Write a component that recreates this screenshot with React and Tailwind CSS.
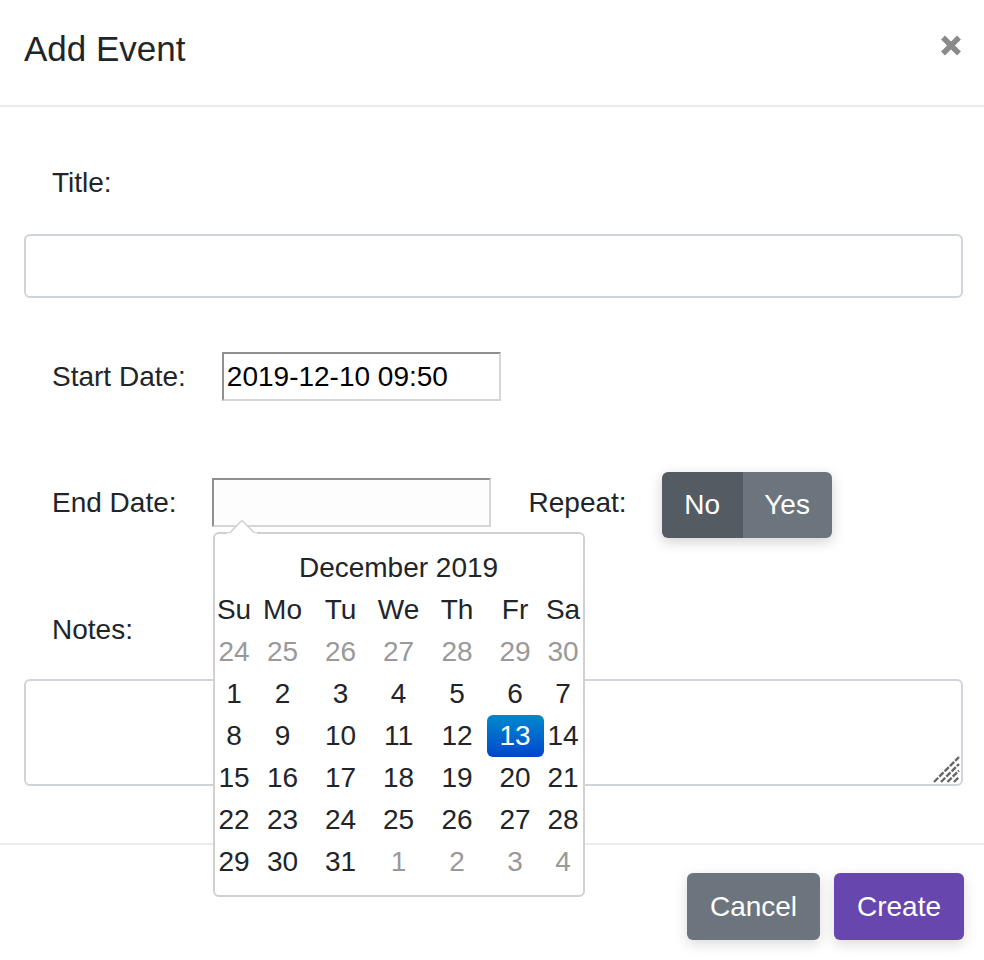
import React from 'react';

const cols = 'grid grid-cols-[39px_58px_58px_58px_59px_57px_39px]';

const weeks = [
  [[24, 1], [25, 1], [26, 1], [27, 1], [28, 1], [29, 1], [30, 1]],
  [[1], [2], [3], [4], [5], [6], [7]],
  [[8], [9], [10], [11], [12], [13], [14]],
  [[15], [16], [17], [18], [19], [20], [21]],
  [[22], [23], [24], [25], [26], [27], [28]],
  [[29], [30], [31], [1, 1], [2, 1], [3, 1], [4, 1]],
];

const DatePicker = () => (
  <div className="absolute left-[1px] top-[54px] z-10 w-[372px] h-[365px] bg-white border-2 border-[#d0d0d0] rounded-md pt-[13px] text-[28px] leading-[42px] text-[#212529]">
    <svg className="absolute left-[12px] top-[-15px]" width="30" height="16" viewBox="0 0 30 16">
      <polygon points="1,15.5 15,1.5 29,15.5" fill="white" stroke="#d0d0d0" strokeWidth="1.5" />
      <rect x="0" y="14" width="30" height="2" fill="white" />
    </svg>
    <div className="text-center h-[42px]">December 2019</div>
    <div className={cols}>
      {['Su', 'Mo', 'Tu', 'We', 'Th', 'Fr', 'Sa'].map((d) => (
        <div key={d} className="text-center h-[42px]">{d}</div>
      ))}
    </div>
    {weeks.map((week, i) => (
      <div key={i} className={cols}>
        {week.map(([day, muted]) => {
          const active = day === 13 && !muted;
          return (
            <div
              key={day + '-' + (muted ? 'm' : 'c')}
              className={`text-center h-[42px] ${
                active
                  ? 'bg-gradient-to-b from-[#0088cc] to-[#0044cc] text-white rounded-[6px]'
                  : muted
                  ? 'text-[#999999]'
                  : ''
              }`}
            >
              {day}
            </div>
          );
        })}
      </div>
    ))}
  </div>
);

const App = () => {
  return (
    <div className="w-[984px] h-[960px] bg-white flex flex-col font-['Liberation_Sans',Arial,sans-serif] text-[#212529] overflow-hidden">
      <header className="h-[107px] shrink-0 flex items-start justify-between pl-6 pr-[22px] pt-[28px] border-b-2 border-[#e9ecef]">
        <h1 className="text-[35px] leading-[42px] font-normal">Add Event</h1>
        <svg className="mt-[7px]" width="22" height="21" viewBox="0 0 22 21">
          <path d="M3 2.5 L19 18.5 M19 2.5 L3 18.5" stroke="#8a8a8a" strokeWidth="5.5" strokeLinecap="butt" />
        </svg>
      </header>

      <div className="pl-6 pr-[21px] flex flex-col text-[28px] leading-[34px]">
        <label className="pl-7 mt-[59px]">Title:</label>
        <input className="mt-[34px] h-[64px] w-full border-2 border-[#ced4da] rounded-md outline-none" />

        <div className="mt-[54px] flex items-center h-[49px]">
          <label className="pl-7">Start Date:</label>
          <input
            readOnly
            value="2019-12-10 09:50"
            className="ml-[36px] w-[279px] h-[49px] pl-[3px] text-[28px] text-black border-2 border-t-[#8f8f8f] border-l-[#8f8f8f] border-r-[#d6d6d6] border-b-[#d6d6d6] outline-none"
          />
        </div>

        <div className="mt-[71px] flex items-start h-[66px]">
          <label className="pl-7 mt-[14px]">End Date:</label>
          <div className="relative ml-[35px] mt-[6px]">
            <input className="w-[279px] h-[49px] bg-[#fdfdfd] border-2 border-t-[#8f8f8f] border-l-[#8f8f8f] border-r-[#d6d6d6] border-b-[#d6d6d6] outline-none" />
            <DatePicker />
          </div>
          <label className="ml-[38px] mt-[14px]">Repeat:</label>
          <div className="ml-[35px] flex h-[66px] rounded-md overflow-hidden shadow-[0_4px_14px_rgba(0,0,0,0.18)] text-white">
            <button className="w-[81px] h-full bg-[#545b62] flex items-center justify-center">No</button>
            <button className="w-[89px] h-full bg-[#6c757d] flex items-center justify-center">Yes</button>
          </div>
        </div>

        <label className="pl-7 mt-[75px]">Notes:</label>
        <div className="relative mt-[32px]">
          <textarea className="block w-full h-[107px] border-2 border-[#ced4da] rounded-md resize-none outline-none" />
          <svg className="absolute right-[3px] bottom-[3px]" width="28" height="28" viewBox="0 0 28 28">
            <g stroke="#666666" strokeWidth="2.4" strokeDasharray="6 1.5">
              <line x1="2" y1="27" x2="27" y2="2" />
              <line x1="9" y1="27" x2="27" y2="9" />
              <line x1="15.5" y1="27" x2="27" y2="15.5" />
              <line x1="22" y1="27" x2="27" y2="22" />
            </g>
          </svg>
        </div>
      </div>

      <footer className="mt-[57px] border-t-2 border-[#e9ecef] pt-[28px] pr-5 flex justify-end gap-[14px] text-[28px] text-white">
        <button className="w-[133px] h-[67px] rounded-md bg-[#6c757d] shadow-[0_4px_14px_rgba(0,0,0,0.15)]">Cancel</button>
        <button className="w-[130px] h-[67px] rounded-md bg-[#6747ad] shadow-[0_4px_14px_rgba(0,0,0,0.15)]">Create</button>
      </footer>
    </div>
  );
};

export default App;
